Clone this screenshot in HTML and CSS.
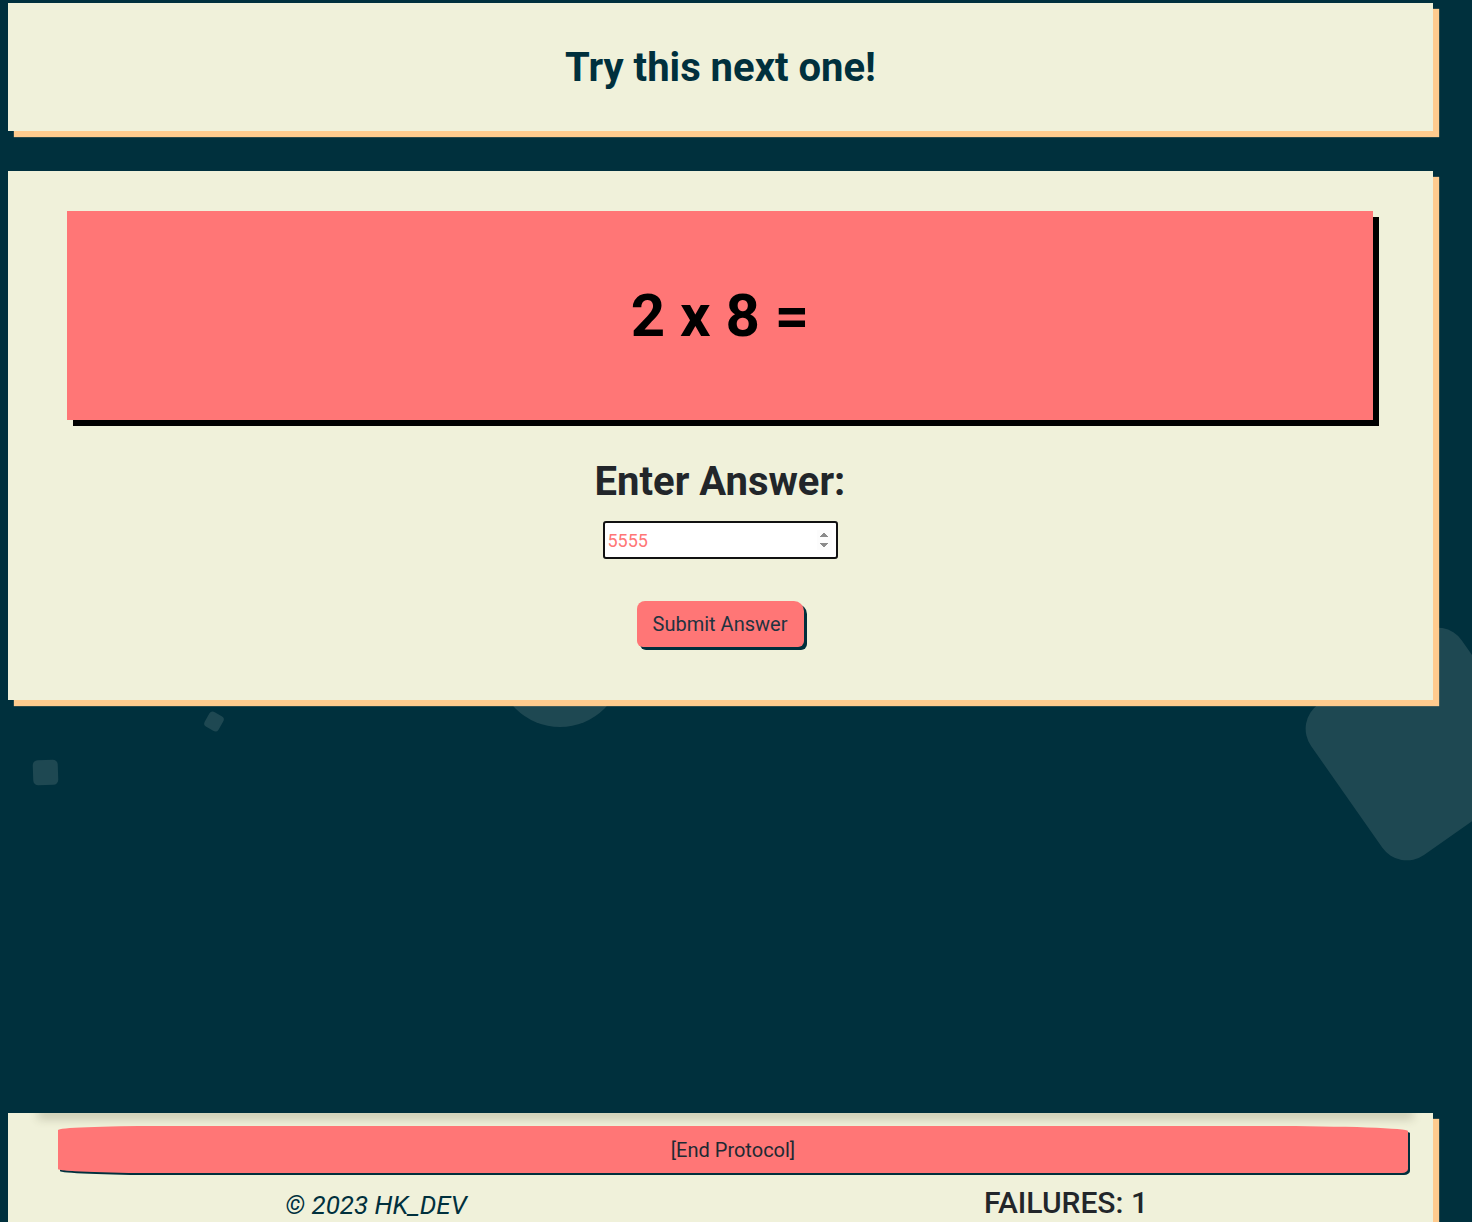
FILE: index.html
```html
<!DOCTYPE html>
<html lang="en">
<head>
<meta charset="utf-8">
<title>Multiplication Practice</title>
<link rel="stylesheet" href="styles.css">
</head>
<body>
<div class="bg-shapes" aria-hidden="true">
  <div class="shape shape-big"></div>
  <div class="shape shape-circle"></div>
  <div class="shape shape-small-a"></div>
  <div class="shape shape-small-b"></div>
</div>
<div class="page">
  <header class="card top-card">
    <h1 class="title">Try this next one!</h1>
  </header>
  <main class="card main-card">
    <div class="problem">2 x 8 =</div>
    <h2 class="answer-label">Enter Answer:</h2>
    <input class="answer-input" type="number" value="5555" autofocus>
    <button class="submit-btn" type="button">Submit Answer</button>
  </main>
  <footer class="card footer-card">
    <button class="end-btn" type="button">[End Protocol]</button>
    <div class="footer-row">
      <span class="copyright">© 2023 HK_DEV</span>
      <span class="failures">FAILURES: 1</span>
    </div>
  </footer>
</div>
</body>
</html>
```
FILE: styles.css
```css
html, body {
  margin: 0;
  padding: 0;
}
body {
  background: #00303d;
  font-family: Roboto, "Liberation Sans", sans-serif;
  height: 1222px;
  overflow: hidden;
  position: relative;
}
.bg-shapes {
  position: absolute;
  inset: 0;
  z-index: 0;
  overflow: hidden;
}
.shape {
  position: absolute;
  background: #1e4852;
}
.shape-big {
  left: 1330px;
  top: 652px;
  width: 184px;
  height: 184px;
  border-radius: 30px;
  transform: rotate(-35deg);
}
.shape-circle {
  left: 497px;
  top: 601px;
  width: 126px;
  height: 126px;
  border-radius: 50%;
}
.shape-small-a {
  left: 206px;
  top: 713px;
  width: 16px;
  height: 17px;
  border-radius: 4px;
  transform: rotate(30deg);
}
.shape-small-b {
  left: 33px;
  top: 760px;
  width: 25px;
  height: 25px;
  border-radius: 5px;
  transform: rotate(-2deg);
}
.page {
  position: relative;
  z-index: 1;
  padding: 3px 0 0 8px;
  width: 1425px;
}
.card {
  background: #f0f1da;
  box-shadow: 6px 6px 0 #ffcb8e, 6px 6px 1px #ffcb8e;
}
.top-card {
  height: 128px;
  display: flex;
  align-items: center;
  justify-content: center;
}
.title {
  margin: 0;
  font-size: 40px;
  font-weight: 700;
  color: #00303d;
}
.main-card {
  margin-top: 40px;
  padding: 40px 60px 53px 59px;
  display: flex;
  flex-direction: column;
  align-items: center;
}
.problem {
  align-self: stretch;
  height: 209px;
  background: #ff7676;
  box-shadow: 6px 6px 0 #000;
  display: flex;
  align-items: center;
  justify-content: center;
  font-size: 60px;
  font-weight: 700;
  color: #000;
}
.answer-label {
  margin: 38px 0 0;
  font-size: 40px;
  line-height: 47px;
  font-weight: 700;
  color: #22262a;
}
.answer-input {
  margin-top: 16px;
  box-sizing: border-box;
  width: 235px;
  height: 38px;
  border: 2px solid #111;
  border-radius: 3px;
  background: #fff;
  padding: 0 4px 0 3px;
  font-family: Roboto, sans-serif;
  font-size: 18px;
  color: #ff7676;
  caret-color: #ff7676;
  outline: none;
}
.submit-btn {
  margin-top: 42px;
  width: 167px;
  height: 46px;
  border: none;
  border-radius: 8px 10px 6px 6px;
  background: #ff7676;
  box-shadow: 3px 3px 0 #00303d;
  font-family: Roboto, sans-serif;
  font-size: 20px;
  color: #1f3340;
  cursor: pointer;
}
.footer-card {
  margin-top: 413px;
  height: 140px;
  padding-top: 13px;
  box-sizing: border-box;
  position: relative;
  overflow: hidden;
}
.footer-card::before {
  content: "";
  position: absolute;
  top: -10px;
  left: 30px;
  right: 20px;
  height: 10px;
  box-shadow: 0 6px 10px rgba(60, 60, 30, 0.22);
}
.end-btn {
  display: block;
  box-sizing: border-box;
  width: 1350px;
  height: 47px;
  margin-left: 50px;
  border: none;
  background: #ff7676;
  border-radius: 100px 140px 6px 100px / 4px 5px 4px 4px;
  box-shadow: 2px 2px 0 #00303d;
  font-family: Roboto, sans-serif;
  font-size: 20px;
  color: #1d2a33;
  position: relative;
  z-index: 1;
}
.footer-row {
  display: grid;
  grid-template-columns: 1fr 1fr;
  padding: 0 22px 0 23px;
  margin-top: 12px;
  align-items: end;
}
.copyright {
  text-align: center;
  font-style: italic;
  font-size: 26px;
  color: #00303d;
}
.failures {
  text-align: center;
  font-size: 30px;
  font-weight: 500;
  color: #22262a;
}
```
